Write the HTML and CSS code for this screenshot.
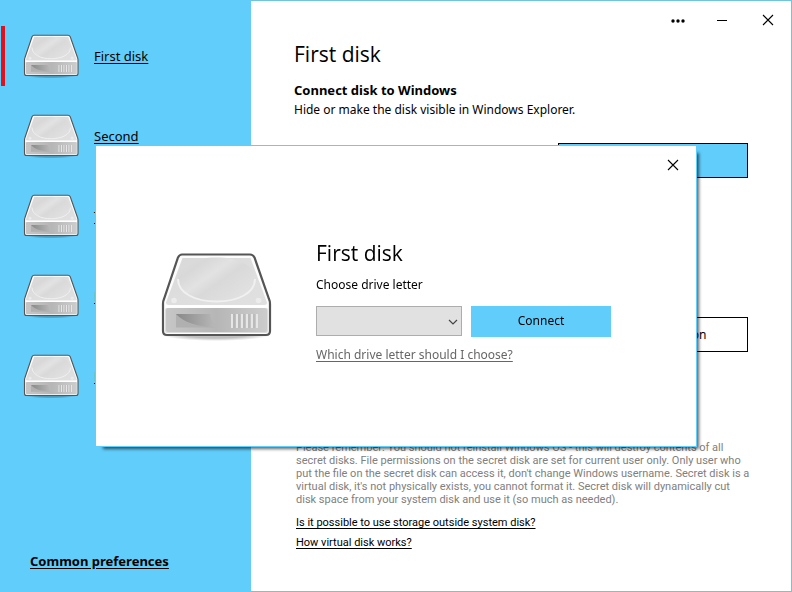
FILE: index.html
```html
<!DOCTYPE html>
<html lang="en">
<head>
    <meta charset="UTF-8">
    <title>Secret Disk</title>
    <link rel="stylesheet" href="styles.css">
</head>
<body>
<!-- shared disk picture -->
<svg class="sprite" aria-hidden="true">
    <defs>
        <linearGradient id="top" x1="0" y1="0" x2="1" y2="1">
            <stop offset="0" stop-color="#d8d8d8"/>
            <stop offset="0.5" stop-color="#dedede"/>
            <stop offset="1" stop-color="#e0e0e0"/>
        </linearGradient>
        <linearGradient id="plate" x1="0" y1="0" x2="1" y2="0.8">
            <stop offset="0" stop-color="#dedede"/>
            <stop offset="0.25" stop-color="#d8d8d8"/>
            <stop offset="0.45" stop-color="#e2e2e2"/>
            <stop offset="0.6" stop-color="#d9d9d9"/>
            <stop offset="1" stop-color="#e2e2e2"/>
        </linearGradient>
        <linearGradient id="front" x1="0" y1="0" x2="1" y2="0">
            <stop offset="0" stop-color="#c6c6c6"/>
            <stop offset="0.5" stop-color="#b6b6b6"/>
            <stop offset="1" stop-color="#cccccc"/>
        </linearGradient>
        <linearGradient id="slot" x1="0" y1="0" x2="1" y2="0">
            <stop offset="0" stop-color="#888888"/>
            <stop offset="1" stop-color="#bababa"/>
        </linearGradient>
        <radialGradient id="shade">
            <stop offset="0.6" stop-color="#000000" stop-opacity="0.25"/>
            <stop offset="1" stop-color="#000000" stop-opacity="0"/>
        </radialGradient>
    </defs>
    <symbol id="disk" viewBox="0 0 112 92">
        <ellipse cx="56" cy="84" rx="56" ry="7" fill="url(#shade)"/>
        <path d="M22 4.500H90Q93 4.500 94.500 7.500L109 49Q110 51 110 54V81Q110 85 106 85H7Q3 85 3 81V54Q3 51 4 49L18 7.500Q19.500 4.500 22 4.500Z" fill="#fcfcfc" stroke="#555555" stroke-width="2.200"/>
        <path d="M22.500 8H90.500L107 52.500Q107 55 104 55H9Q6 55 6 52.500Z" fill="url(#top)"/>
        <path d="M18 29C18 15 35 7.500 56.500 7.500S95 15 95 29S78 51.500 56.500 51.500S18 43 18 29Z" fill="url(#plate)"/>
        <path d="M18 29C18 43 35 51.500 56.500 51.500S95 43 95 29" fill="none" stroke="#f0f0f0" stroke-width="2"/>
        <circle cx="14" cy="50.500" r="2.800" fill="#ececec"/>
        <circle cx="98.500" cy="50.500" r="2.800" fill="#ececec"/>
        <path d="M5 56.500H108" stroke="#ffffff" stroke-width="2"/>
        <rect x="5" y="58" width="103" height="25" rx="2" fill="#dedede"/>
        <rect x="6" y="58" width="101" height="24" rx="2" fill="url(#front)"/>
        <path d="M16 64H50C50 70 54 75 57 77.500H16Z" fill="#b0b0b0"/>
        <path d="M16 64H50C50 70 54 75 57 77.500C38 76.500 24 73 16 64Z" fill="url(#slot)"/>
        <path d="M72 64V78M77 64V78M82 64V78M87 64V78M92 64V78M97 64V78" stroke="#e6e6e6" stroke-width="2"/>
        <path d="M74 64V78M79 64V78M84 64V78M89 64V78M94 64V78" stroke="#b0b0b0" stroke-width="1"/>
    </symbol>
    <symbol id="close" viewBox="0 0 12 12">
        <path d="M1 1L11 11M11 1L1 11" stroke="#000000" stroke-width="1.100"/>
    </symbol>
</svg>

<div class="window">
    <nav class="sidebar">
        <ul class="disks">
            <li class="disk active"><svg class="disk-icon"><use href="#disk"/></svg><a href="#">First disk</a></li>
            <li class="disk"><svg class="disk-icon"><use href="#disk"/></svg><a href="#">Second</a></li>
            <li class="disk"><svg class="disk-icon"><use href="#disk"/></svg><a href="#">Third</a></li>
            <li class="disk"><svg class="disk-icon"><use href="#disk"/></svg><a href="#">Fourth</a></li>
            <li class="disk"><svg class="disk-icon"><use href="#disk"/></svg><a href="#">Fifth</a></li>
        </ul>
        <a class="preferences" href="#">Common preferences</a>
    </nav>

    <main class="panel">
        <div class="controls">
            <button class="control" aria-label="Menu">
                <svg width="18" height="12"><circle cx="6" cy="7" r="1.700"/><circle cx="11" cy="7" r="1.700"/><circle cx="16" cy="7" r="1.700"/></svg>
            </button>
            <button class="control" aria-label="Minimize">
                <svg width="10" height="12"><rect y="6" width="10" height="1"/></svg>
            </button>
            <button class="control" aria-label="Close"><svg width="12" height="12"><use href="#close"/></svg></button>
        </div>
        <div class="content">
            <h1 class="title">First disk</h1>
            <section class="option">
                <h2>Connect disk to Windows</h2>
                <p>Hide or make the disk visible in Windows Explorer.</p>
                <button class="btn primary" aria-label="Connect"></button>
            </section>
            <section class="option">
                <button class="btn">Change encryption</button>
            </section>
            <div class="notes">
                <p>Please remember: You should not reinstall Windows OS - this will destroy contents of all<br>
                    secret disks. File permissions on the secret disk are set for current user only. Only user who<br>
                    put the file on the secret disk can access it, don't change Windows username. Secret disk is a<br>
                    virtual disk, it's not physically exists, you cannot format it. Secret disk will dynamically cut<br>
                    disk space from your system disk and use it (so much as needed).</p>
                <a href="#">Is it possible to use storage outside system disk?</a>
                <a href="#">How virtual disk works?</a>
            </div>
        </div>
    </main>
</div>

<div class="overlay">
    <div class="dialog" role="dialog" aria-labelledby="dialog-title">
        <button class="control dialog-close" aria-label="Close"><svg width="12" height="12"><use href="#close"/></svg></button>
        <svg class="dialog-icon"><use href="#disk"/></svg>
        <form class="dialog-form">
            <h2 class="title" id="dialog-title">First disk</h2>
            <label for="letter">Choose drive letter</label>
            <div class="row">
                <div class="select">
                    <select id="letter"><option></option></select>
                    <svg class="arrow" width="10" height="6"><path d="M1 1L5 5L9 1" fill="none" stroke="#444444" stroke-width="1.200"/></svg>
                </div>
                <button class="connect" type="button">Connect</button>
            </div>
            <a class="help" href="#">Which drive letter should I choose?</a>
        </form>
    </div>
</div>
</body>
</html>
```

FILE: styles.css
```css
*{
    margin: 0;
    padding: 0;
    list-style: none;
    box-sizing: border-box;
}
body,button,select{
    font-family: "Noto Sans", sans-serif;
    font-size: 12px;
    line-height: 20px;
    color: #000;
}
a{
    color: #000;
    text-underline-offset: 2px;
}
.sprite{
    position: absolute;
    width: 0;
    height: 0;
}
.window{
    display: flex;
    min-height: 100vh;
    background-color: #fff;
    border: 1px solid #6fc4de;
}

/* sidebar */
.sidebar{
    display: flex;
    flex-direction: column;
    justify-content: space-between;
    flex: 0 0 250px;
    margin: -1px 0 -1px -1px;
    padding: 26px 0 21px 1px;
    box-sizing: content-box;
    background-color: #60cdfb;
}
.disks{
    display: grid;
    gap: 20px;
}
.disk{
    display: flex;
    align-items: center;
    gap: 15px;
    height: 60px;
    padding-left: 18px;
    border-left: 4px solid transparent;
    font-size: 13px;
}
.disk.active{
    border-left-color: #e0101c;
}
.disk-icon{
    width: 56px;
    height: 46px;
}
.preferences{
    align-self: flex-start;
    margin-left: 29px;
    font-size: 13px;
    font-weight: bold;
}

/* main panel */
.panel{
    flex: 1;
    min-width: 0;
}
.controls{
    display: flex;
    justify-content: flex-end;
}
.control{
    display: flex;
    align-items: center;
    justify-content: center;
    width: 46px;
    height: 38px;
    background: none;
    border: none;
}
.content{
    padding: 0 43px;
}
.title{
    font-family: "Open Sans", sans-serif;
    font-size: 21px;
    font-weight: 400;
    line-height: 30px;
}
.option{
    display: flex;
    flex-direction: column;
    height: 174px;
    padding: 11px 0 65px;
}
.option h2{
    font-size: 13px;
}
.option .btn{
    align-self: flex-end;
    width: 190px;
    height: 35px;
    margin-top: auto;
    background-color: #fff;
    border: 1px solid #000;
}
.option .btn.primary{
    background-color: #60cdfb;
}
.notes{
    display: flex;
    flex-direction: column;
    align-items: flex-start;
    padding: 24px 0 0 2px;
    font-family: Roboto, sans-serif;
    font-size: 11px;
}
.notes p{
    margin-bottom: 7px;
    line-height: 13px;
    white-space: nowrap;
    color: #808080;
}

/* dialog */
.overlay{
    position: fixed;
    inset: 0;
    display: flex;
    align-items: center;
    justify-content: center;
}
.dialog{
    position: relative;
    display: flex;
    align-items: center;
    gap: 44px;
    width: 602px;
    min-height: 302px;
    padding: 0 64px;
    background-color: #fff;
    border: 1px solid #60cdfb;
    box-shadow: 5px 5px 3px -3px rgba(0, 0, 0, 0.6);
}
.dialog-close{
    position: absolute;
    top: 0;
    right: 0;
}
.dialog-icon{
    width: 112px;
    height: 92px;
}
.dialog-form{
    display: flex;
    flex-direction: column;
    align-items: flex-start;
    padding-top: 10px;
}
.dialog-form label{
    margin: 7px 0 11px;
}
.row{
    display: flex;
    gap: 9px;
    margin-bottom: 8px;
}
.select{
    position: relative;
    width: 146px;
    height: 30px;
}
.select select{
    width: 100%;
    height: 100%;
    appearance: none;
    background-color: #e1e1e1;
    border: 1px solid #adadad;
    border-radius: 0;
}
.arrow{
    position: absolute;
    top: 13px;
    right: 4px;
    pointer-events: none;
}
.connect{
    width: 140px;
    height: 31px;
    background-color: #60cdfb;
    border: none;
}
.help{
    color: #666;
}
```
